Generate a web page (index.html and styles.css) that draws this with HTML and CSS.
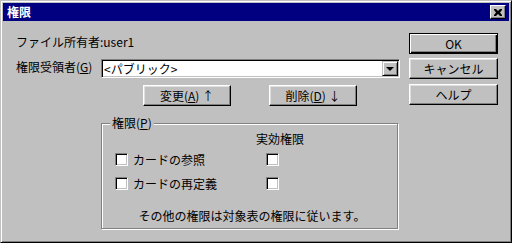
FILE: index.html
```html
<!DOCTYPE html>
<html lang="ja">
<head>
    <meta charset="UTF-8">
    <title>権限</title>
    <link rel="stylesheet" href="styles.css">
</head>
<body>
    <div class="window">
        <div class="title-bar">
            <span class="title">権限</span>
            <span class="close-btn">
                <svg width="8" height="7" viewBox="0 0 8 7"><path d="M0 0h2l2 2 2-2h2v1L6 3.5 8 6v1H6L4 5 2 7H0V6l2-2.5L0 1z" fill="#000"/></svg>
            </span>
        </div>
        <div class="dialog-body">
            <div class="main">
                <div class="owner">ファイル所有者:user1</div>
                <div class="grantee">
                    <span class="grantee-label">権限受領者(<u>G</u>)</span>
                    <div class="combo">
                        <span class="combo-text">&lt;パブリック&gt;</span>
                        <span class="combo-btn"><span class="arrow"></span></span>
                    </div>
                </div>
                <div class="actions">
                    <span class="btn btn-action">変更(<u>A</u>) ↑</span>
                    <span class="btn btn-action">削除(<u>D</u>) ↓</span>
                </div>
                <div class="group">
                    <div class="group-title">権限(<u>P</u>)</div>
                    <div class="eff-header">実効権限</div>
                    <div class="perm-row">
                        <span class="check"></span>
                        <span class="perm-label">カードの参照</span>
                        <span class="check"></span>
                    </div>
                    <div class="perm-row second">
                        <span class="check"></span>
                        <span class="perm-label">カードの再定義</span>
                        <span class="check"></span>
                    </div>
                    <div class="note">その他の権限は対象表の権限に従います。</div>
                </div>
            </div>
            <div class="side">
                <span class="btn btn-default">OK</span>
                <span class="btn btn-cancel">キャンセル</span>
                <span class="btn btn-help">ヘルプ</span>
            </div>
        </div>
    </div>
</body>
</html>
```

FILE: styles.css
```css
/* Win95 style permission dialog */
body {
    margin: 0;
    padding: 0;
    background: #c0c0c0;
    font-family: "Noto Sans CJK JP", "Liberation Sans", sans-serif;
    font-size: 12px;
    color: #000;
}
.window {
    box-sizing: border-box;
    width: 512px;
    height: 243px;
    padding: 2px;
    background: #c0c0c0;
    border: 1px solid;
    border-color: #c0c0c0 #000 #000 #c0c0c0;
    box-shadow: inset 1px 1px #fff, inset -1px -1px #808080;
}
.title-bar {
    height: 18px;
    background: #000080;
    color: #fff;
    display: flex;
    align-items: center;
    justify-content: space-between;
    padding: 0 3px 0 4px;
}
.title {
    font-weight: bold;
    line-height: 18px;
}
.close-btn {
    box-sizing: border-box;
    width: 16px;
    height: 14px;
    background: #c0c0c0;
    border: 1px solid;
    border-color: #fff #000 #000 #fff;
    box-shadow: inset -1px -1px #808080;
    display: flex;
    align-items: center;
    justify-content: center;
}
.dialog-body {
    display: flex;
    gap: 9px;
    padding: 12px 0 0 13px;
}
.main {
    width: 384px;
}
.owner {
    height: 18px;
    line-height: 18px;
}
.grantee {
    display: flex;
    margin-top: 8px;
    height: 19px;
}
.grantee-label {
    width: 85px;
    line-height: 15px;
}
.combo {
    box-sizing: border-box;
    width: 299px;
    height: 19px;
    background: #fff;
    border: 1px solid;
    border-color: #808080 #fff #fff #808080;
    box-shadow: inset 1px 1px #000, inset -1px -1px #c0c0c0;
    padding: 1px;
    display: flex;
}
.combo-text {
    flex: 1;
    line-height: 15px;
    padding-left: 1px;
}
.combo-btn {
    box-sizing: border-box;
    width: 16px;
    height: 15px;
    background: #c0c0c0;
    border: 1px solid;
    border-color: #c0c0c0 #000 #000 #c0c0c0;
    box-shadow: inset 1px 1px #fff, inset -1px -1px #808080;
    display: flex;
    align-items: center;
    justify-content: center;
}
.arrow {
    width: 0;
    height: 0;
    border-left: 4px solid transparent;
    border-right: 4px solid transparent;
    border-top: 4px solid #000;
}
.btn {
    box-sizing: border-box;
    display: flex;
    align-items: center;
    justify-content: center;
    height: 21px;
    background: #c0c0c0;
    border: 1px solid;
    border-color: #fff #000 #000 #fff;
    box-shadow: inset -1px -1px #808080, inset 1px 1px #dfdfdf;
}
.actions {
    display: flex;
    gap: 38px;
    margin-top: 7px;
    padding-left: 127px;
}
.btn-action {
    width: 88px;
}
.group {
    box-sizing: border-box;
    margin: 17px 0 0 85px;
    width: 297px;
    height: 106px;
    border: 1px solid #808080;
    box-shadow: inset 1px 1px #fff, 1px 1px #fff;
    padding-left: 13px;
}
.group-title {
    width: fit-content;
    margin: -8px 0 0 -5px;
    padding: 0 2px;
    height: 14px;
    line-height: 14px;
    background: #c0c0c0;
}
.eff-header {
    margin: 2px 0 0 141px;
    height: 14px;
    line-height: 14px;
}
.perm-row {
    display: flex;
    align-items: center;
    height: 13px;
    margin-top: 7px;
}
.perm-row.second {
    margin-top: 11px;
}
.perm-label {
    width: 133px;
    padding-left: 5px;
}
.check {
    box-sizing: border-box;
    width: 13px;
    height: 13px;
    background: #fff;
    border: 1px solid;
    border-color: #808080 #fff #fff #808080;
    box-shadow: inset 1px 1px #000, inset -1px -1px #c0c0c0;
}
.note {
    margin: 19px 0 0 -8px;
    text-align: center;
    height: 14px;
    line-height: 14px;
}
.side {
    width: 89px;
    display: flex;
    flex-direction: column;
}
.btn-default {
    border-color: #000;
    box-shadow: inset 1px 1px #fff, inset -1px -1px #000, inset -2px -2px #808080;
}
.btn-cancel {
    margin-top: 4px;
}
.btn-help {
    margin-top: 5px;
}
```
